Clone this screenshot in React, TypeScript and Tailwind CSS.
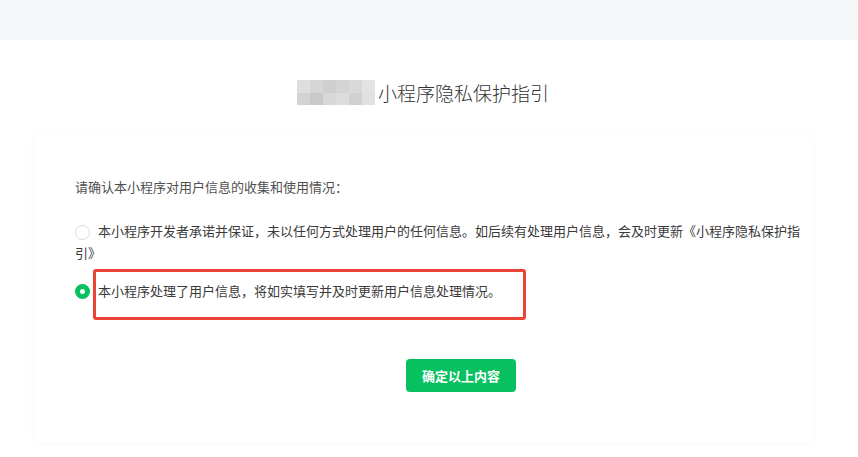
import React from "react";

const mosaic = [
  "#dedede", "#d6d6d6", "#cfcfcf", "#d4d4d4", "#d9d9d9", "#e3e3e3",
  "#d3d3d3", "#c9c9c9", "#d8d8d8", "#dcdcdc", "#d1d1d1", "#e1e1e1",
];

export default function App() {
  return (
    <div
      className="min-h-[457px] w-full bg-white text-[#353535]"
      style={{ fontFamily: '"Noto Sans CJK SC", "Noto Sans", "Liberation Sans", sans-serif' }}
    >
      <div className="h-[40px] bg-[#f6f7f9]" />
      <div className="ml-[34px] w-[778px]">
        <div className="mt-[40px] flex items-center justify-center">
          <div className="grid h-[25px] w-[78px] grid-cols-6 grid-rows-2">
            {mosaic.map((c, i) => (
              <div key={i} style={{ backgroundColor: c }} />
            ))}
          </div>
          <span className="ml-[3px] text-[19px] font-light leading-[25px] text-[#333333]">小程序隐私保护指引</span>
        </div>
        <div className="mt-[30px] rounded-[4px] bg-white pl-[41px] pr-[7px] pt-[41px] pb-[50px] shadow-[0_0_6px_rgba(0,0,0,0.035)]">
          <div className="text-[13px] leading-[22px] text-[#505050]">请确认本小程序对用户信息的收集和使用情况：</div>
          <div className="mt-[22px] text-[13px] leading-[22px] text-[#3a3a3a]">
            <span className="mr-[8px] inline-block h-[15px] w-[15px] rounded-full border border-[#dcdcdc] bg-white align-middle" />
            本小程序开发者承诺并保证，未以任何方式处理用户的任何信息。如后续有处理用户信息，会及时更新《小程序隐私保护指引》
          </div>
          <div className="relative mt-[16px] flex items-center text-[13px] leading-[22px] text-[#3a3a3a]">
            <span className="mr-[8px] flex h-[15px] w-[15px] items-center justify-center rounded-full bg-[#07c160]">
              <span className="h-[5px] w-[5px] rounded-full bg-white" />
            </span>
            <span>本小程序处理了用户信息，将如实填写并及时更新用户信息处理情况。</span>
            <div className="pointer-events-none absolute left-[18px] top-[-11px] h-[51px] w-[433px] rounded-[3px] border-[3px] border-[#ea4335]" />
          </div>
          <button className="ml-[331px] mt-[57px] flex h-[33px] w-[110px] items-center justify-center rounded-[4px] bg-[#07c160] text-[13px] font-bold text-white">
            确定以上内容
          </button>
        </div>
      </div>
    </div>
  );
}
